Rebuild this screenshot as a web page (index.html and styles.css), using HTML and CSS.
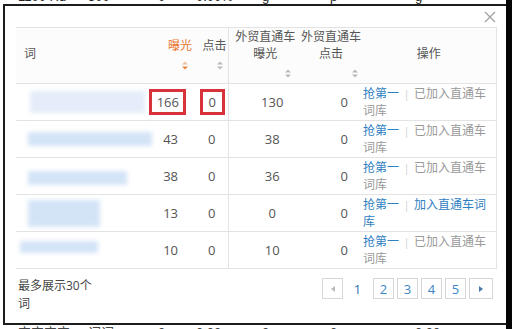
FILE: index.html
```html
<!DOCTYPE html>
<html lang="zh-CN">
<head>
    <meta charset="UTF-8">
    <title>词表</title>
    <link rel="stylesheet" href="styles.css">
</head>
<body>
    <div class="screen">
        <div class="main">
            <div class="under under-top">
                <div class="under-line">
                    <span class="u1">1100 Hd</span><span class="u2">300</span><span class="u3">0</span><span class="u4">0.00%</span><span class="u5">g</span><span class="u6">p</span><span class="u7">g</span>
                </div>
            </div>

            <div class="modal">
                <div class="modal-head">
                    <span class="close">
                        <svg width="12" height="12" viewBox="0 0 12 12"><path d="M1 1L11 11M11 1L1 11" stroke="#a3a3a3" stroke-width="1.4" fill="none"/></svg>
                    </span>
                </div>

                <table class="words">
                    <colgroup>
                        <col class="c-word">
                        <col class="c-exp">
                        <col class="c-clk">
                        <col class="c-pexp">
                        <col class="c-pclk">
                        <col class="c-op">
                    </colgroup>
                    <thead>
                        <tr>
                            <th class="col-word">词</th>
                            <th class="col-exp sorted">
                                <div class="label">曝光</div>
                                <div class="sort"><svg width="6" height="9" viewBox="0 0 6 9"><polygon points="0,3.5 3,0.5 6,3.5" fill="#ecc29c"/><polygon points="0,5.5 3,8.5 6,5.5" fill="#e8843c"/></svg></div>
                            </th>
                            <th class="col-clk">
                                <div class="label">点击</div>
                                <div class="sort"><svg width="6" height="9" viewBox="0 0 6 9"><polygon points="0,3.5 3,0.5 6,3.5" fill="#b9b9b9"/><polygon points="0,5.5 3,8.5 6,5.5" fill="#b9b9b9"/></svg></div>
                            </th>
                            <th class="col-pexp">
                                <div class="label">外贸直通车曝光</div>
                                <div class="sort"><svg width="6" height="9" viewBox="0 0 6 9"><polygon points="0,3.5 3,0.5 6,3.5" fill="#b9b9b9"/><polygon points="0,5.5 3,8.5 6,5.5" fill="#b9b9b9"/></svg></div>
                            </th>
                            <th class="col-pclk">
                                <div class="label">外贸直通车点击</div>
                                <div class="sort"><svg width="6" height="9" viewBox="0 0 6 9"><polygon points="0,3.5 3,0.5 6,3.5" fill="#b9b9b9"/><polygon points="0,5.5 3,8.5 6,5.5" fill="#b9b9b9"/></svg></div>
                            </th>
                            <th class="col-op">操作</th>
                        </tr>
                    </thead>
                    <tbody>
                        <tr>
                            <td class="col-word"><div class="smudge s1"></div></td>
                            <td class="col-exp"><span class="mark mark-exp">166</span></td>
                            <td class="col-clk"><span class="mark mark-clk">0</span></td>
                            <td class="col-pexp">130</td>
                            <td class="col-pclk">0</td>
                            <td class="col-op"><a class="link">抢第一</a><span class="sep">|</span><span class="done">已加入直通车词库</span></td>
                        </tr>
                        <tr>
                            <td class="col-word"><div class="smudge s2"></div></td>
                            <td class="col-exp">43</td>
                            <td class="col-clk">0</td>
                            <td class="col-pexp">38</td>
                            <td class="col-pclk">0</td>
                            <td class="col-op"><a class="link">抢第一</a><span class="sep">|</span><span class="done">已加入直通车词库</span></td>
                        </tr>
                        <tr>
                            <td class="col-word"><div class="smudge s3"></div></td>
                            <td class="col-exp">38</td>
                            <td class="col-clk">0</td>
                            <td class="col-pexp">36</td>
                            <td class="col-pclk">0</td>
                            <td class="col-op"><a class="link">抢第一</a><span class="sep">|</span><span class="done">已加入直通车词库</span></td>
                        </tr>
                        <tr>
                            <td class="col-word"><div class="smudge s4"></div></td>
                            <td class="col-exp">13</td>
                            <td class="col-clk">0</td>
                            <td class="col-pexp">0</td>
                            <td class="col-pclk">0</td>
                            <td class="col-op"><a class="link">抢第一</a><span class="sep">|</span><a class="link">加入直通车词库</a></td>
                        </tr>
                        <tr>
                            <td class="col-word"><div class="smudge s5"></div></td>
                            <td class="col-exp">10</td>
                            <td class="col-clk">0</td>
                            <td class="col-pexp">10</td>
                            <td class="col-pclk">0</td>
                            <td class="col-op"><a class="link">抢第一</a><span class="sep">|</span><span class="done">已加入直通车词库</span></td>
                        </tr>
                    </tbody>
                </table>

                <div class="foot">
                    <div class="foot-note">最多展示30个词</div>
                    <div class="pager">
                        <span class="page prev"><svg width="4" height="6" viewBox="0 0 4 6"><polygon points="4,0 0,3 4,6" fill="#bbb"/></svg></span>
                        <span class="page current">1</span>
                        <span class="page">2</span>
                        <span class="page">3</span>
                        <span class="page">4</span>
                        <span class="page">5</span>
                        <span class="page next"><svg width="4" height="6" viewBox="0 0 4 6"><polygon points="0,0 4,3 0,6" fill="#4a78a8"/></svg></span>
                    </div>
                </div>
            </div>

            <div class="under under-bottom">
                <div class="under-line">
                    <span class="u1">宝宝宝宝</span><span class="u2">词词</span><span class="u3">0</span><span class="u4">0.00</span><span class="u5">0</span><span class="u6">0</span><span class="u7">0.00</span>
                </div>
            </div>
        </div>
        <div class="edge"></div>
    </div>
</body>
</html>
```

FILE: styles.css
```css
* {
    margin: 0px;
    padding: 0px;
    box-sizing: border-box;
}
body {
    background: #fff;
    font-family: "Open Sans", "Noto Sans CJK SC", sans-serif;
    color: #555;
}
.screen {
    display: flex;
    width: 512px;
    height: 329px;
    overflow: hidden;
}
.main {
    display: flex;
    flex-direction: column;
    width: 506px;
}
.edge {
    width: 6px;
    background: #050505;
}

/* page behind the dialog */
.under {
    overflow: hidden;
    font-family: "Liberation Sans", sans-serif;
    font-size: 13px;
    line-height: 15px;
    color: #222;
    white-space: nowrap;
}
.under-top {
    height: 4px;
}
.under-top .under-line {
    margin-top: -11px;
}
.under-bottom {
    height: 4px;
    color: #444;
}
.under-bottom .under-line {
    margin-top: 0px;
}
.under-line {
    padding-left: 18px;
}
.under-line span {
    display: inline-block;
}
.u1 { width: 70px; }
.u2 { width: 70px; }
.u3 { width: 38px; }
.u4 { width: 66px; }
.u5 { width: 68px; }
.u6 { width: 85px; }
.u7 { width: 40px; }

/* dialog */
.modal {
    height: 321px;
    margin-left: 3px;
    border: 2px solid #1c1c1c;
    border-right: none;
    background: #fff;
    display: flex;
    flex-direction: column;
}
.modal-head {
    height: 21px;
    display: flex;
    justify-content: flex-end;
    align-items: center;
    padding-right: 10px;
}
.close {
    display: flex;
    cursor: pointer;
}

/* table */
.words {
    margin-left: 11px;
    width: 480px;
    table-layout: fixed;
    border-collapse: collapse;
    border-top: 1px solid #e3e3e3;
    border-right: 1px solid #e3e3e3;
    font-size: 12px;
}
.c-word { width: 132px; }
.c-exp { width: 48px; }
.c-clk { width: 32px; }
.c-pexp { width: 72px; }
.c-pclk { width: 62px; }
.c-op { width: 134px; }

.words th {
    height: 55px;
    background: #fcfcfc;
    font-weight: normal;
    color: #555;
    line-height: 17px;
    vertical-align: middle;
    padding-top: 0px;
    padding-bottom: 5px;
}
.words th .sort {
    height: 10px;
    margin-top: 6px;
    text-align: right;
    padding-right: 4px;
    line-height: 10px;
}
.words th .sort svg {
    display: inline-block;
    vertical-align: top;
    margin-top: 1px;
}
.words th.col-word {
    text-align: left;
    padding-left: 8px;
}
.words th.col-exp {
    text-align: right;
    padding-right: 4px;
}
.words th.sorted .label {
    color: #e8772e;
}
.words th.col-clk {
    text-align: right;
    padding-right: 1px;
}
.words th.col-pexp {
    text-align: center;
    padding-left: 6px;
    padding-right: 4px;
}
.words th.col-pexp .sort {
    padding-right: 5px;
}
.words th.col-pclk {
    text-align: center;
}
.words th.col-op {
    text-align: center;
}

.words td {
    height: 37px;
    border-top: 1px solid #e3e3e3;
    border-bottom: 1px solid #e3e3e3;
    font-size: 13px;
    color: #555;
    vertical-align: middle;
}
.words .col-clk {
    border-right: 1px solid #e3e3e3;
}
.words td.col-exp {
    text-align: right;
    padding-right: 18px;
}
.words td.col-clk {
    text-align: center;
}
.words td.col-pexp {
    text-align: center;
    padding-left: 16px;
}
.words td.col-pclk {
    text-align: right;
    padding-right: 14px;
}
.words td.col-op {
    padding-left: 1px;
    padding-right: 8px;
    font-size: 12px;
    line-height: 17px;
    color: #999;
}
.link {
    color: #2f80c2;
    cursor: pointer;
}
.sep {
    display: inline-block;
    width: 15px;
    text-align: center;
    color: #d0d0d0;
    font-size: 11px;
}
.done {
    color: #999;
}

/* red annotation boxes */
.mark {
    display: inline-block;
    border: 3px solid #d8323a;
    line-height: 20px;
}
.mark-exp {
    padding: 0 4px 0 5px;
    margin-right: -8px;
}
.mark-clk {
    padding: 0 6px;
    margin-left: 1px;
}

/* blurred words */
.smudge {
    background: #d4e4f7;
    filter: blur(2px);
}
.s1 {
    width: 115px;
    height: 22px;
    margin-left: 14px;
    background: #e4edf9;
}
.s2 {
    width: 124px;
    height: 14px;
    margin-left: 12px;
}
.s3 {
    width: 99px;
    height: 14px;
    margin-left: 12px;
    margin-top: 4px;
}
.s4 {
    width: 72px;
    height: 27px;
    margin-left: 12px;
}
.s5 {
    width: 78px;
    height: 12px;
    margin-left: 4px;
    margin-top: -6px;
}

/* footer */
.foot {
    width: 480px;
    margin-left: 11px;
    padding: 8px 3px 0 2px;
    display: flex;
    justify-content: space-between;
    align-items: flex-start;
}
.foot-note {
    width: 80px;
    font-size: 12px;
    line-height: 18px;
    color: #444;
}
.pager {
    display: flex;
    margin-top: 1px;
}
.page {
    width: 21px;
    height: 21px;
    margin-left: 3px;
    border: 1px solid #d6d6d6;
    display: flex;
    align-items: center;
    justify-content: center;
    font-size: 13px;
    color: #3a86c6;
    cursor: pointer;
}
.page.prev {
    margin-left: 0;
}
.page.current {
    width: 25px;
    border: none;
    color: #2a6fae;
    margin-left: 2px;
}
.page.next {
    width: 24px;
}
```
